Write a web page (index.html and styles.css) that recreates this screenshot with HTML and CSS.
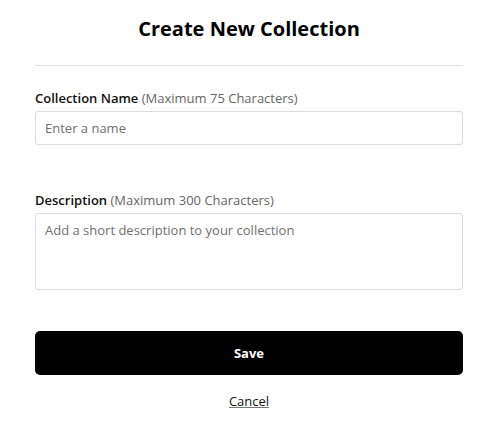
FILE: index.html
```html
<!DOCTYPE html>
<html>
<head>
<meta charset="utf-8">
<link rel="stylesheet" href="styles.css">
</head>
<body>
<div class="modal">
  <h1 class="title">Create New Collection</h1>
  <hr class="divider">
  <div class="field">
    <label class="label">Collection Name <span class="hint">(Maximum 75 Characters)</span></label>
    <input class="input" type="text" placeholder="Enter a name">
  </div>
  <div class="field field-desc">
    <label class="label">Description <span class="hint">(Maximum 300 Characters)</span></label>
    <textarea class="textarea" placeholder="Add a short description to your collection"></textarea>
  </div>
  <button class="save">Save</button>
  <div class="cancel-row"><a class="cancel" href="#">Cancel</a></div>
</div>
</body>
</html>
```
FILE: styles.css
```css
html, body {
  margin: 0;
  padding: 0;
  background: #fff;
}
body {
  font-family: "Open Sans", "Liberation Sans", sans-serif;
  color: #111;
}
.modal {
  width: 428px;
  padding: 16px 37px 0 35px;
  display: flex;
  flex-direction: column;
}
.title {
  margin: 0;
  font-size: 20px;
  font-weight: 700;
  line-height: 26px;
  text-align: center;
  color: #000;
}
.divider {
  margin: 23px 0 0 0;
  border: 0;
  border-top: 1px solid #e0e0e0;
  height: 0;
}
.field {
  display: flex;
  flex-direction: column;
  margin-top: 23px;
}
.field-desc {
  margin-top: 46px;
}
.label {
  font-size: 13px;
  font-weight: 600;
  line-height: 18px;
  color: #111;
  margin-bottom: 4px;
}
.hint {
  font-weight: 400;
  color: #666;
}
.input, .textarea {
  box-sizing: border-box;
  width: 100%;
  border: 1px solid #dcdcdc;
  border-radius: 3px;
  font-family: inherit;
  font-size: 13px;
  color: #111;
  padding: 0 9px;
  margin: 0;
  outline: none;
}
.input {
  height: 34px;
}
.textarea {
  height: 77px;
  padding-top: 7px;
  resize: none;
  display: block;
}
.input::placeholder, .textarea::placeholder {
  color: #707070;
}
.save {
  margin-top: 41px;
  height: 44px;
  width: 100%;
  background: #000;
  color: #fff;
  border: 0;
  border-radius: 5px;
  font-family: inherit;
  font-size: 13px;
  font-weight: 700;
}
.cancel-row {
  text-align: center;
  margin-top: 14px;
}
.cancel {
  font-size: 13px;
  color: #111;
  text-decoration: underline;
  text-decoration-color: #777;
  line-height: 18px;
}
```
